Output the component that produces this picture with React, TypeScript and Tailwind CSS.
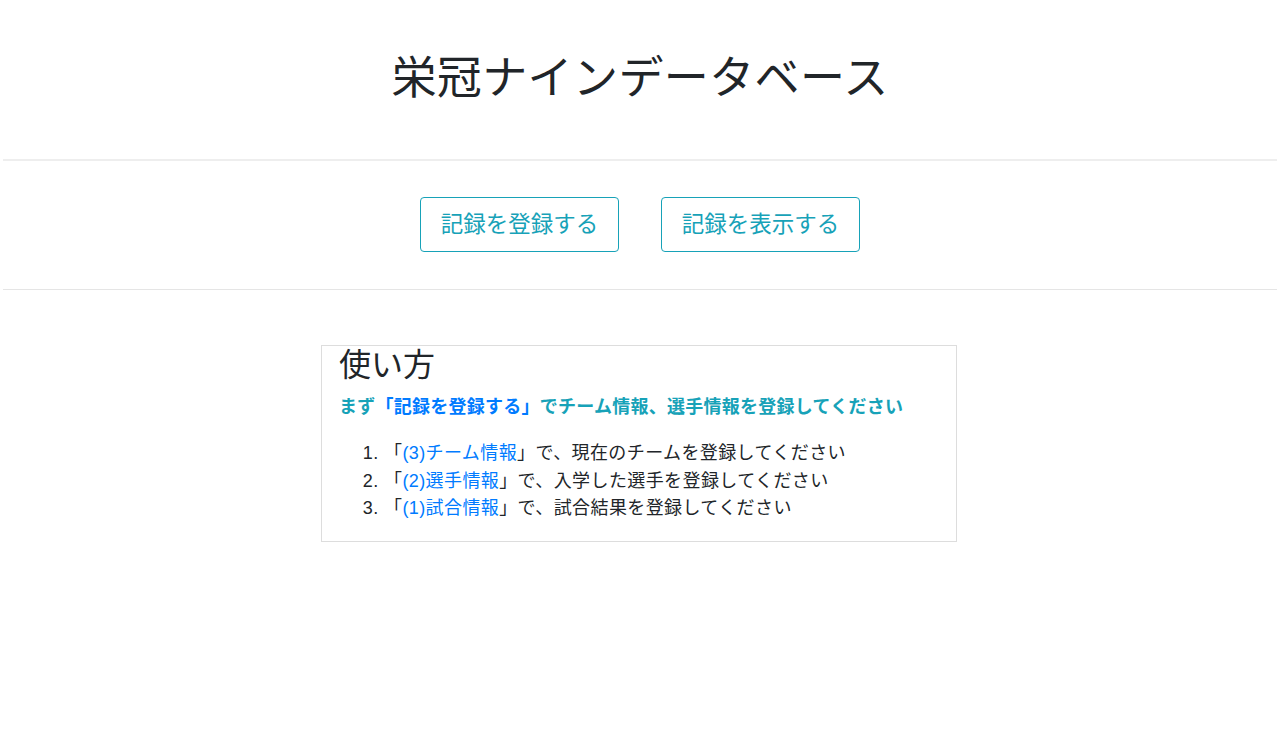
export default function App() {
  const font = {
    fontFamily:
      '"Liberation Sans", "Noto Sans CJK JP", sans-serif',
  };

  return (
    <div className="min-h-screen bg-white text-[#212529]" style={font}>
      <div className="pt-[49px] mb-[50px] text-center text-[45px] leading-[60px] font-normal tracking-[0.4px]">
        栄冠ナインデータベース
      </div>
      <div className="mx-[3px] h-[2px] bg-[#eeeeee]" />

      <div className="flex justify-center gap-[42px] pt-[36px] pb-[37px]">
        <button className="h-[55px] w-[199px] rounded border border-[#17a2b8] text-[22.5px] text-[#17a2b8]">
          記録を登録する
        </button>
        <button className="h-[55px] w-[199px] rounded border border-[#17a2b8] text-[22.5px] text-[#17a2b8]">
          記録を表示する
        </button>
      </div>
      <div className="mx-[3px] h-px bg-[#e5e5e5]" />

      <div className="mx-auto mt-[55px] w-[636px] -translate-x-px border border-[#dddddd] px-[17px] pb-[18px]">
        <div className="text-[32px] leading-[38px]">使い方</div>
        <div className="mt-[10px] text-[18px] leading-[27px] font-bold tracking-[0.25px] text-[#17a2b8]">
          まず<span className="text-[#007bff]">「記録を登録する」</span>
          でチーム情報、選手情報を登録してください
        </div>
        <ol className="mt-[19px] list-decimal pl-[45px] text-[18px] leading-[27.5px] tracking-[0.4px]">
          <li>
            「<span className="text-[#007bff]">(3)チーム情報</span>
            」で、現在のチームを登録してください
          </li>
          <li>
            「<span className="text-[#007bff]">(2)選手情報</span>
            」で、入学した選手を登録してください
          </li>
          <li>
            「<span className="text-[#007bff]">(1)試合情報</span>
            」で、試合結果を登録してください
          </li>
        </ol>
      </div>
    </div>
  );
}
